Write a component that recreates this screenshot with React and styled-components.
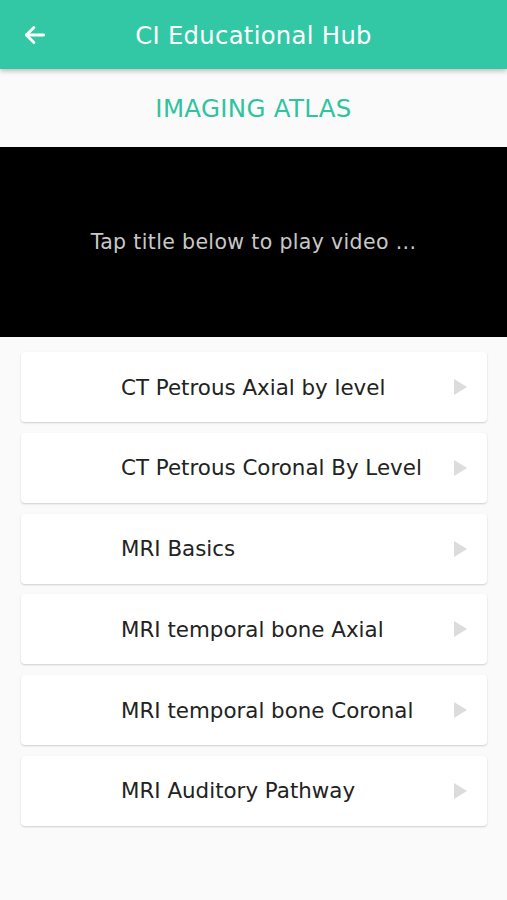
import React from "react";
import styled, { createGlobalStyle } from "styled-components";

const Global = createGlobalStyle`
  html, body { margin: 0; padding: 0; background: #fafafa; }
  body { font-family: "DejaVu Sans", "Noto Sans", sans-serif; }
  * { box-sizing: border-box; }
`;

const Page = styled.div`
  width: 507px;
  min-height: 900px;
  background: #fafafa;
  display: flex;
  flex-direction: column;
`;

const Header = styled.header`
  height: 69px;
  background: #32c8a6;
  display: flex;
  align-items: center;
  position: relative;
  box-shadow: 0 2px 5px rgba(0, 0, 0, 0.25);
  z-index: 1;
`;

const BackButton = styled.button`
  width: 70px;
  height: 69px;
  border: none;
  background: transparent;
  display: flex;
  align-items: center;
  padding-left: 22px;
  color: #fff;
`;

const Title = styled.h1`
  flex: 1;
  margin: 2px 70px 0 0;
  text-align: center;
  color: #ffffff;
  font-size: 24.3px;
  font-weight: 400;
  letter-spacing: 0.3px;
`;

const Section = styled.div`
  height: 78px;
  display: flex;
  align-items: center;
  justify-content: center;
  color: #2fc3a0;
  font-size: 24.5px;
  letter-spacing: 0.3px;
`;

const Video = styled.div`
  height: 190px;
  background: #000;
  display: flex;
  align-items: center;
  justify-content: center;
  color: #c8c8c8;
  font-size: 20.5px;
  letter-spacing: 0.35px;
`;

const List = styled.div`
  display: flex;
  flex-direction: column;
  gap: 10.8px;
  padding: 15px 20px 0 21px;
`;

const Card = styled.div`
  height: 70px;
  background: #fff;
  border-radius: 4px;
  box-shadow: 0 1px 2px rgba(0, 0, 0, 0.18);
  display: flex;
  align-items: center;
  padding-left: 100px;
  padding-right: 20px;
`;

const Label = styled.span`
  flex: 1;
  color: #222;
  font-size: 21.4px;
  white-space: nowrap;
`;

const Arrow = styled.span`
  width: 0;
  height: 0;
  border-top: 8px solid transparent;
  border-bottom: 8px solid transparent;
  border-left: 13px solid #dcdcdc;
`;

const items = [
  "CT Petrous Axial by level",
  "CT Petrous Coronal By Level",
  "MRI Basics",
  "MRI temporal bone Axial",
  "MRI temporal bone Coronal",
  "MRI Auditory Pathway",
];

export default function App() {
  return (
    <Page>
      <Global />
      <Header>
        <BackButton aria-label="back">
          <svg width="26" height="26" viewBox="0 0 24 24" fill="none" stroke="#fff" strokeWidth="2.6" strokeLinecap="round" strokeLinejoin="round">
            <path d="M20 12H4" />
            <path d="M11 5l-7 7 7 7" />
          </svg>
        </BackButton>
        <Title>CI Educational Hub</Title>
      </Header>
      <Section>IMAGING ATLAS</Section>
      <Video>Tap title below to play video ...</Video>
      <List>
        {items.map((t) => (
          <Card key={t}>
            <Label>{t}</Label>
            <Arrow />
          </Card>
        ))}
      </List>
    </Page>
  );
}
